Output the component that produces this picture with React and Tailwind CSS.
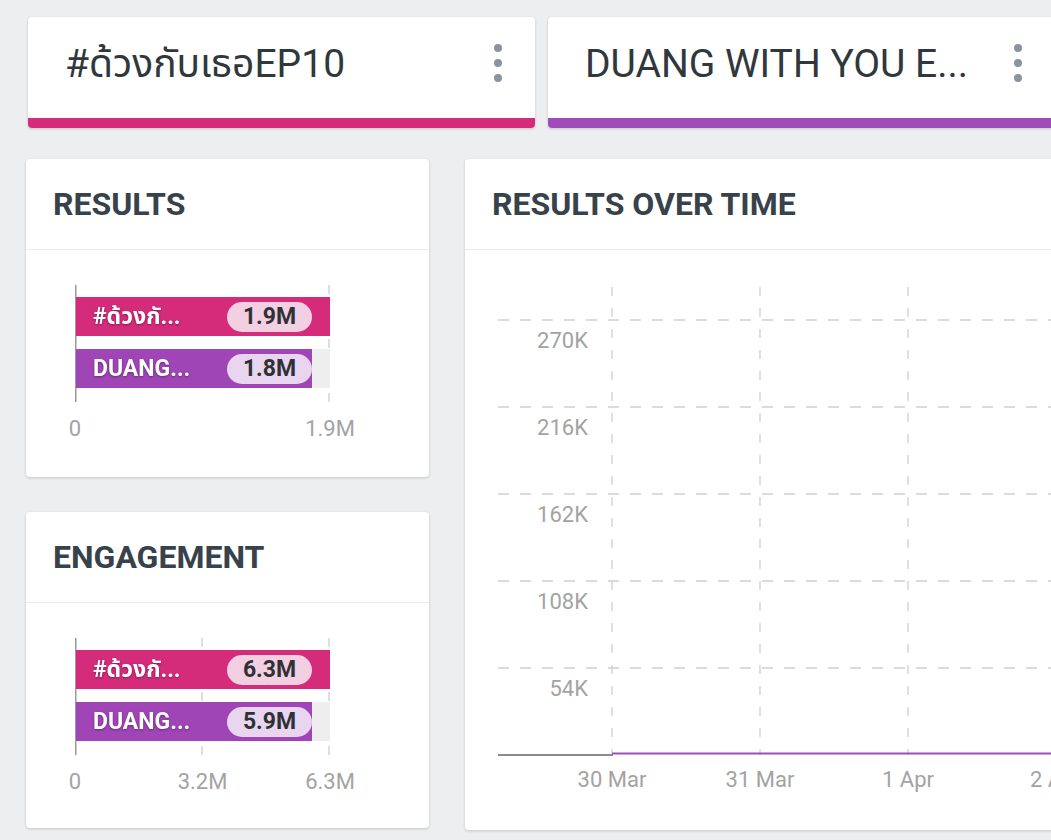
import React from 'react';

const FONT = "font-['Roboto','Noto_Sans_Thai','Noto_Sans',sans-serif]";

const topics = [
  { name: '#ด้วงกับเธอEP10', bar: 'bg-[#d42b7a]' },
  { name: 'DUANG WITH YOU E...', bar: 'bg-[#a04cb8]' },
];

const TopicCard = ({ name, bar }) => (
  <div className="w-[507px] h-[111px] bg-white rounded-[4px] shadow-[0_1px_3px_rgba(0,0,0,0.18)] flex flex-col overflow-hidden">
    <div className="flex-1 flex items-center justify-between pl-[37px] pr-[33px] pb-[6px]">
      <span className="text-[39px] text-[#30373d] leading-none">{name}</span>
      <div className="flex flex-col gap-[7px] pb-[4px]">
        <span className="w-[8px] h-[8px] rounded-full bg-[#8895a1]" />
        <span className="w-[8px] h-[8px] rounded-full bg-[#8895a1]" />
        <span className="w-[8px] h-[8px] rounded-full bg-[#8895a1]" />
      </div>
    </div>
    <div className={`h-[10px] ${bar}`} />
  </div>
);

const CardHeader = ({ title }) => (
  <div className="h-[91px] border-b border-[#e9ebed] flex items-center px-[27px]">
    <h2 className="text-[32px] font-bold text-[#37424a] leading-none">{title}</h2>
  </div>
);

// small horizontal bar chart
const BarChart = ({ rows, ticks }) => (
  <div className="ml-[49px] mt-[35px] w-[255px]">
    <div className="relative h-[117px]">
      <svg className="absolute inset-0" width="255" height="117">
        <line x1="0.75" y1="0" x2="0.75" y2="117" stroke="#9a9a9a" strokeWidth="1.5" />
        {ticks.slice(1).map((t) => (
          <line
            key={t.label}
            x1={t.pos * 254}
            y1="0"
            x2={t.pos * 254}
            y2="117"
            stroke="#c8c8c8"
            strokeWidth="1.2"
            strokeDasharray="9 9"
          />
        ))}
      </svg>
      <div className="relative pt-[12px] flex flex-col gap-[13px] pl-[1px]">
        {rows.map((r) => (
          <div key={r.label} className="relative h-[39px] bg-[#eeeeee]">
            <div className={`absolute inset-y-0 left-0 ${r.color}`} style={{ width: `${r.pct}%` }} />
            <div className="relative h-full flex items-center justify-between pl-[17px] pr-[18px]">
              <span className="text-white font-bold text-[23px] leading-none drop-shadow-[0_1px_1px_rgba(0,0,0,0.35)]">
                {r.label}
              </span>
              <span className={`w-[85px] h-[30px] rounded-full ${r.pill} flex items-center justify-center text-[23px] font-bold text-[#2e3236] leading-none`}>
                {r.value}
              </span>
            </div>
          </div>
        ))}
      </div>
    </div>
    <div className="relative h-[40px] mt-[8px]">
      {ticks.map((t) => (
        <span
          key={t.label}
          className="absolute top-[8px] -translate-x-1/2 text-[22px] text-[#a3a3a3] leading-none"
          style={{ left: `${t.pos * 100}%` }}
        >
          {t.label}
        </span>
      ))}
    </div>
  </div>
);

const resultRows = [
  { label: '#ด้วงกั...', value: '1.9M', pct: 100, color: 'bg-[#d42b7a]', pill: 'bg-[#f3cfe2]' },
  { label: 'DUANG...', value: '1.8M', pct: 93, color: 'bg-[#9f45b6]', pill: 'bg-[#ead5f0]' },
];

const engagementRows = [
  { label: '#ด้วงกั...', value: '6.3M', pct: 100, color: 'bg-[#d42b7a]', pill: 'bg-[#f3cfe2]' },
  { label: 'DUANG...', value: '5.9M', pct: 93, color: 'bg-[#9f45b6]', pill: 'bg-[#ead5f0]' },
];

const yLines = [
  { y: 70, label: '270K' },
  { y: 157, label: '216K' },
  { y: 244, label: '162K' },
  { y: 331, label: '108K' },
  { y: 418, label: '54K' },
];

const xTicks = [
  { x: 147, label: '30 Mar' },
  { x: 295, label: '31 Mar' },
  { x: 443, label: '1 Apr' },
  { x: 591, label: '2 Apr' },
];

const LineChart = () => (
  <svg width="640" height="580" className="block">
    {yLines.map((l) => (
      <g key={l.label}>
        <line x1="33" y1={l.y} x2="640" y2={l.y} stroke="#cfcfcf" strokeWidth="1.3" strokeDasharray="11 11" />
        <text
          x="123"
          y={l.y + 22}
          textAnchor="end"
          dominantBaseline="middle"
          fontSize="22"
          fill="#a3a3a3"
          fontFamily="Roboto, sans-serif"
        >
          {l.label}
        </text>
      </g>
    ))}
    {xTicks.map((t) => (
      <g key={t.label}>
        <line x1={t.x} y1="37" x2={t.x} y2="505" stroke="#cfcfcf" strokeWidth="1.3" strokeDasharray="9 12" />
        <text x={t.x} y="531" textAnchor="middle" dominantBaseline="middle" fontSize="22" fill="#a3a3a3" fontFamily="Roboto, sans-serif">
          {t.label}
        </text>
      </g>
    ))}
    <line x1="33" y1="505" x2="148" y2="505" stroke="#8c8c8c" strokeWidth="1.8" />
    <line x1="147" y1="503.5" x2="640" y2="503.5" stroke="#a04cb8" strokeWidth="2.2" />
  </svg>
);

export default function App() {
  return (
    <div className={`w-full h-[840px] bg-[#eceef0] overflow-hidden ${FONT}`}>
      <div className="w-[1140px] pl-[26px] pt-[17px]">
        <div className="flex gap-[13px] pl-[2px]">
          {topics.map((t) => (
            <TopicCard key={t.name} {...t} />
          ))}
        </div>

        <div className="flex gap-[36px] mt-[31px]">
          <div className="w-[403px] flex flex-col gap-[35px]">
            <div className="h-[318px] bg-white rounded-[4px] shadow-[0_1px_3px_rgba(0,0,0,0.18)]">
              <CardHeader title="RESULTS" />
              <BarChart rows={resultRows} ticks={[{ pos: 0, label: '0' }, { pos: 1, label: '1.9M' }]} />
            </div>
            <div className="h-[316px] bg-white rounded-[4px] shadow-[0_1px_3px_rgba(0,0,0,0.18)]">
              <CardHeader title="ENGAGEMENT" />
              <BarChart
                rows={engagementRows}
                ticks={[
                  { pos: 0, label: '0' },
                  { pos: 0.5, label: '3.2M' },
                  { pos: 1, label: '6.3M' },
                ]}
              />
            </div>
          </div>

          <div className="w-[640px] h-[671px] bg-white rounded-[4px] shadow-[0_1px_3px_rgba(0,0,0,0.18)] overflow-hidden">
            <CardHeader title="RESULTS OVER TIME" />
            <LineChart />
          </div>
        </div>
      </div>
    </div>
  );
}
